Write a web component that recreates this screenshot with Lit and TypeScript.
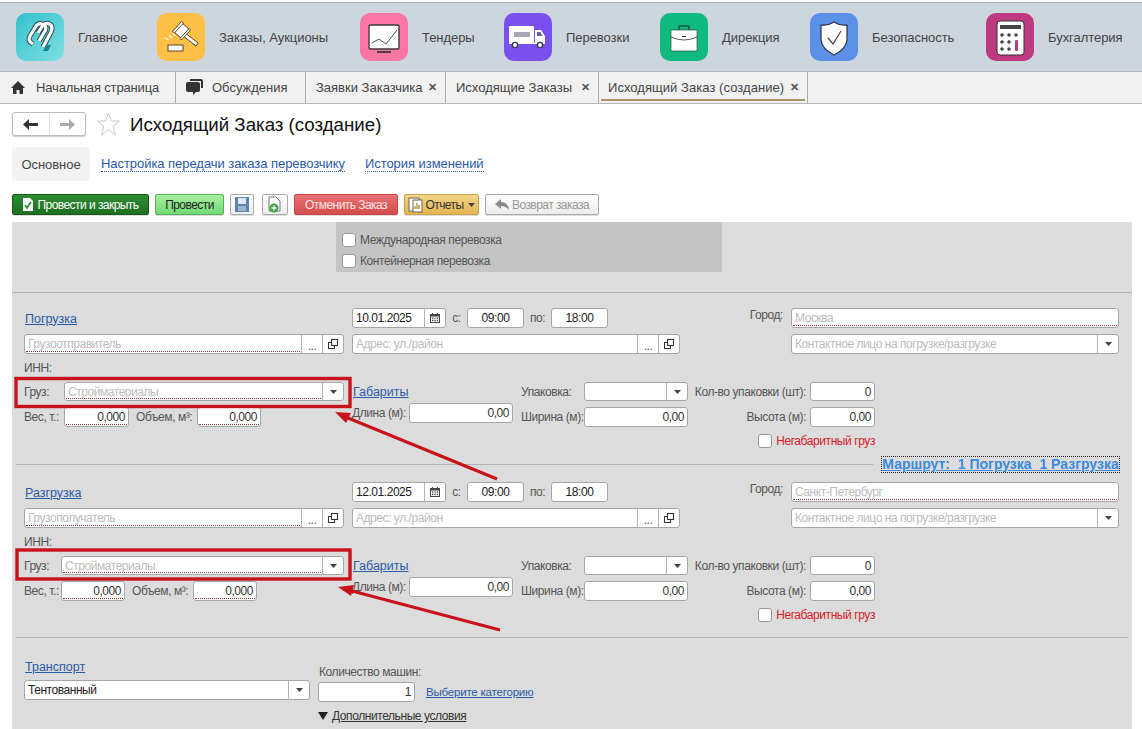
import { LitElement, html, css, svg } from "lit";
import { customElement } from "lit/decorators.js";

const ICONS: Record<string, unknown> = {
  logo: svg`<g fill="none" stroke-linecap="butt" stroke-linejoin="round">
    <g stroke="#2f4a55" stroke-width="5.2"><path d="M17 31 Q11 28 14 23 L20 13 Q23 9 28 12 Q31 14 29 18 L23 28"/><path d="M22 20 L27 12 Q31 9 35 12 Q37 15 35 19 L27 34"/></g>
    <g stroke="#fff" stroke-width="3.2"><path d="M17 31 Q11 28 14 23 L20 13 Q23 9 28 12 Q31 14 29 18 L23 28"/><path d="M22 20 L27 12 Q31 9 35 12 Q37 15 35 19 L27 34"/></g></g>
    <path d="M27 38 L32 38 L35 32 L30 32 Z" fill="#16858e"/>`,
  gavel: svg`<g stroke="#5a4420" stroke-width="1" fill="#fff">
    <path d="M27 19 L41 30 L39 33 L25 22 Z"/>
    <path d="M17 19 L25 10 L32 16 L24 25 Z"/>
    <path d="M15.5 18.5 L24.5 8.5 L26.5 10 L17.5 20 Z"/>
    <path d="M23 25.5 L32 15.5 L33.5 17 L24.5 27 Z"/></g>
    <rect x="11" y="32" width="15" height="6" fill="#fff" stroke="#5a4420"/>
    <g stroke="#fff" stroke-width="1.2"><path d="M12 22 L15 25"/><path d="M8 25 L12 27"/><path d="M16 20 L18 23"/></g>`,
  chart: svg`<rect x="9" y="12" width="30" height="24" rx="1.5" fill="#fff" stroke="#3a3a3a" stroke-width="1.4"/>
    <path d="M12 30 L19 26 L26 31 L37 17" fill="none" stroke="#555" stroke-width="1"/>
    <rect x="17" y="38" width="14" height="2" fill="#444"/>`,
  truck: svg`<rect x="5" y="13" width="25" height="17" rx="1" fill="#fff"/>
    <path d="M31 17 H37 L41 23 V30 H31 Z" fill="#fff"/><path d="M33 19 H36.5 L38.5 23 H33 Z" fill="#6b5e9a"/>
    <path d="M10 19 H26 V24 H10 Z" fill="#a6a6b6"/>
    <rect x="5" y="30" width="36" height="1" fill="#fff"/>
    <g fill="#fff" stroke="#3a3a4a" stroke-width="1.4"><circle cx="11" cy="32" r="2.6"/><circle cx="36" cy="32" r="2.6"/></g>`,
  case: svg`<path d="M19 17 V13 H29 V17" fill="none" stroke="#123" stroke-width="1"/>
    <rect x="11" y="17" width="26" height="21" rx="1" fill="#fff" stroke="#333" stroke-width=".6"/>
    <path d="M11 24 Q24 30 37 24" fill="none" stroke="#333" stroke-width=".8"/><rect x="22" y="23" width="4" height="1" fill="#333"/>`,
  shield: svg`<path d="M24 9 Q30 13 37 12 V27 Q36 36 24 42 Q12 36 11 27 V12 Q18 13 24 9 Z" fill="#fff" stroke="#2b3344" stroke-width="1.2"/>
    <path d="M18 25 L23 31 L31 18" fill="none" stroke="#444" stroke-width="1.2"/>`,
  calc: svg`<rect x="11" y="8" width="27" height="34" rx="3" fill="#fff" stroke="#333" stroke-width="1"/>
    <rect x="14" y="12" width="21" height="4" fill="#444"/>
    <g fill="#444"><circle cx="16" cy="22" r="1.8"/><circle cx="23" cy="22" r="1.8"/><circle cx="30" cy="22" r="1.8"/><circle cx="16" cy="29" r="1.8"/><circle cx="23" cy="29" r="1.8"/><circle cx="16" cy="36" r="1.8"/><circle cx="23" cy="36" r="1.8"/></g>
    <rect x="29" y="27" width="3" height="11" rx="1" fill="#bd3a80"/>`,
};

const NAV = [
  { t: "Главное", i: "logo", c: "teal", w: 48 },
  { t: "Заказы, Аукционы", i: "gavel", c: "orange", w: 110 },
  { t: "Тендеры", i: "chart", c: "pink", w: 51 },
  { t: "Перевозки", i: "truck", c: "purple", w: 63 },
  { t: "Дирекция", i: "case", c: "green", w: 57 },
  { t: "Безопасность", i: "shield", c: "blue", w: 83 },
  { t: "Бухгалтерия", i: "calc", c: "magenta", w: 75 },
];

const caret = html`<svg class="caret" width="7" height="4" viewBox="0 0 7 4"><path d="M0 0H7L3.5 4Z" fill="#444"/></svg>`;
const dots = html`<span class="fb dots">...</span>`;
const copy = html`<span class="fb"><svg width="12" height="12" viewBox="0 0 12 12" fill="none" stroke="#333" stroke-width="1.1"><rect x="4.5" y="1.5" width="6" height="6" fill="#fff"/><path d="M4.5 4.5H1.5V10.5H7.5V7.5"/></svg></span>`;
const dd = html`<span class="fb">${caret}</span>`;
const cal = html`<span class="fb"><svg width="12" height="12" viewBox="0 0 12 12"><rect x="1" y="2" width="10" height="9" fill="#444"/><rect x="2" y="4.5" width="8" height="5.5" fill="#eee"/><g fill="#444"><rect x="3" y="5.5" width="1.2" height="1.2"/><rect x="5.4" y="5.5" width="1.2" height="1.2"/><rect x="7.8" y="5.5" width="1.2" height="1.2"/><rect x="3" y="7.8" width="1.2" height="1.2"/><rect x="5.4" y="7.8" width="1.2" height="1.2"/><rect x="7.8" y="7.8" width="1.2" height="1.2"/></g><rect x="3" y="1" width="1" height="2" fill="#444"/><rect x="8" y="1" width="1" height="2" fill="#444"/></svg></span>`;

@customElement("app-root")
export class AppRoot extends LitElement {
  static styles = css`
    :host { display: block; width: 1142px; height: 729px; overflow: hidden; position: relative; background: #fff;
      font-family: "Liberation Sans", Arial, sans-serif; font-size: 12px; letter-spacing: -0.42px; color: #555; }
    * { box-sizing: border-box; }
    .nav { height: 71px; background: #cdd5dd; border-top: 1px solid #a9b1b9; margin-top: 2px; margin-bottom: -2px; display: flex; align-items: flex-start; gap: 31px; padding: 10px 0 0 16px; }
    .nav-item { display: flex; align-items: center; gap: 14px; font-size: 13px; letter-spacing: -0.05px; color: #444; white-space: nowrap; }
    .ic { width: 48px; height: 48px; border-radius: 10px; display: block; flex: none; }
    .teal { background: linear-gradient(135deg, #31c2cd, #80dfe3); }
    .orange { background: #fdbf45; } .pink { background: #fb76a5; } .purple { background: #7a4ff0; }
    .green { background: #0fb97f; } .blue { background: #5b8fe8; } .magenta { background: #bd3a80; }
    .tabs { height: 33px; background: #f1f1f1; border-top: 1px solid #b4b8bc; border-bottom: 1px solid #b4b8bc; display: flex; font-size: 13px; letter-spacing: 0; color: #444; }
    .tab { height: 100%; display: flex; align-items: center; border-right: 1px solid #aaa; white-space: nowrap; position: relative; }
    .t1 { width: 176px; padding-left: 11px; gap: 11px; letter-spacing: -0.15px; }
    .t2 { width: 130px; padding-left: 10px; gap: 9px; }
    .t3 { width: 140px; padding-left: 10px; }
    .t4 { width: 153px; padding-left: 10px; }
    .t5 { width: 209px; padding-left: 9px; letter-spacing: 0.05px; }
    .x { margin-left: auto; margin-right: 8px; color: #555; font-size: 11px; font-weight: bold; }
    .underline { position: absolute; left: 2px; right: 2px; bottom: 2px; height: 2px; background: #a89468; }
    .head { height: 43px; display: flex; align-items: flex-start; padding: 8px 0 0 12px; }
    .navgrp { width: 74px; height: 24px; border: 1px solid #bbb; border-radius: 3px; display: flex; box-shadow: 0 1px 1px #ccc; background: #fff; }
    .navgrp span { flex: 1; display: flex; align-items: center; justify-content: center; }
    .navgrp span + span { border-left: 1px solid #ddd; }
    .star { margin: 0 10px 0 11px; display: block; }
    h1 { margin: 0; font-size: 18.7px; letter-spacing: 0; font-weight: normal; color: #111; line-height: 26px; white-space: nowrap; }
    .subtabs { height: 34px; display: flex; align-items: center; margin: 0 0 13px 12px; font-size: 13px; letter-spacing: -0.05px; }
    .subtab-on { width: 78px; height: 34px; background: #f2f2f2; border-radius: 3px; display: flex; align-items: center; justify-content: center; color: #444; margin-right: 11px; }
    .dlink { color: #2a5aa8; border-bottom: 1px dotted #2a5aa8; line-height: 14px; margin-right: 20px; }
    .toolbar { height: 21px; margin: 0 0 7px 12px; display: flex; gap: 6px; font-size: 12px; letter-spacing: -0.55px; }
    .btn { height: 21px; border-radius: 2px; display: flex; align-items: center; justify-content: center; gap: 3px; border: 1px solid #aaa; white-space: nowrap; background: linear-gradient(#fff, #ececec); box-shadow: 0 1px 0 #ddd; }
    .b1 { width: 137px; background: linear-gradient(#2f8d32, #1c6f20); border-color: #17591a; color: #fff; }
    .b2 { width: 69px; background: linear-gradient(#a6f0a2, #72da74); border-color: #55b058; color: #222; }
    .b3 { width: 24px; } .b4 { width: 26px; margin-left: 2px; }
    .b5 { width: 104px; background: linear-gradient(#ea7272, #d34c4c); border-color: #c44; color: #fbe4e4; }
    .b6 { width: 75px; background: linear-gradient(#f4d687, #e2b452); border-color: #c9a24a; color: #333; gap: 1px; }
    .b6 .caret { margin-left: 3px; }
    .b7 { width: 114px; color: #999; }
    .panel { margin-left: 12px; width: 1120px; height: 507px; background: #dcdcdc; }
    .flags { margin-left: 324px; width: 386px; height: 50px; background: #c4c4c4; padding: 11px 0 0 6px; display: flex; flex-direction: column; gap: 7px; }
    .chk { display: flex; align-items: center; gap: 3px; height: 14px; white-space: nowrap; }
    .box { width: 14px; height: 14px; background: #fff; border: 1px solid #999; border-radius: 3px; display: block; flex: none; margin-right: 1px; }
    .rule { height: 1px; background: #b2b2b2; }
    .rule-top { margin-top: 20px; }
    .row { display: grid; grid-template-columns: 320px 431px 328px; column-gap: 8px; margin-left: 12px; }
    .r1 { margin-top: 15px; height: 20px; align-items: center; }
    .r2 { margin-top: 6px; height: 20px; }
    .r3 { margin-top: 4px; height: 20px; line-height: 20px; }
    .r4 { margin-top: 4px; height: 19px; grid-template-columns: 320px 523px; }
    .r4 .f { height: 19px; }
    .r5 { margin-top: 2px; height: 24px; grid-template-columns: 320px 523px; align-items: end; }
    .r6 { margin-top: 7px; height: 14px; padding-right: 257px; display: flex; justify-content: flex-end; margin-left: 12px; color: #d8202a; }
    .link { color: #2a5aa8; text-decoration: underline; font-size: 12.5px; letter-spacing: 0; white-space: nowrap; margin-left: 1px; }
    .r1 .link { padding-top: 1px; }
    .f { background: #fff; border: 1px solid #a6a6a6; border-radius: 3px; height: 20px; display: flex; align-items: stretch; flex: none; overflow: hidden; min-width: 0; }
    .v { flex: 1; padding: 1px 2px 0; margin: 1px 1px 1px; line-height: 14px; white-space: nowrap; overflow: hidden; color: #222; min-width: 0; letter-spacing: -0.45px; }
    .ph { color: #bcbcbc; }
    .req { border-bottom: 1px dotted #8a3a3a; }
    .num { text-align: right; color: #333; }
    .ctr { text-align: center; padding-left: 0; padding-right: 0; }
    .fb { width: 21px; flex: none; border-left: 1px solid #b4b4b4; display: flex; align-items: center; justify-content: center; }
    .dots { align-items: flex-end; padding-bottom: 2px; line-height: 10px; }
    .line { display: flex; align-items: center; white-space: nowrap; }
    .lab { flex: none; white-space: nowrap; }
    .right { text-align: right; }
    .mid { display: flex; align-items: center; }
    .mid5 { align-items: flex-end; height: 24px; }
    .top { align-self: flex-start; display: flex; align-items: center; }
    .top .lab { width: 57px; }
    .cell { display: flex; align-items: center; }
    .sep { margin: 8px 0 0 4px; display: flex; align-items: center; gap: 8px; height: 17px; }
    .sep .rule { width: 857px; }
    .route { width: 239px; height: 17px; border: 1px dotted #222; color: #3a8ae0; font-weight: bold; font-size: 14px; letter-spacing: 0; text-decoration: underline; text-align: center; line-height: 15px; white-space: pre; overflow: hidden; }
    .sec2 { margin-top: -6px; }
    .rule-b { margin: 15px 4px 0 4px; }
    .transport { display: flex; margin: 22px 0 0 12px; gap: 8px; }
    .tl { width: 286px; }
    .tl .link { display: block; line-height: 14px; margin-bottom: 6px; }
    .tr { padding-top: 5px; }
    .tr .lab { line-height: 14px; margin-bottom: 3px; margin-left: 1px; }
    .cat { margin-left: 11px; font-size: 11.5px; letter-spacing: -0.2px; }
    .more { margin-top: 7px; height: 14px; line-height: 14px; display: flex; align-items: center; gap: 4px; color: #333; text-decoration: underline; }
    .overlay { position: absolute; left: 0; top: 0; pointer-events: none; }
  `;

  private field(ph: string, val: string, opts: { cls?: string; req?: boolean; w: number; after?: unknown }) {
    return html`<div class="f" style="width:${opts.w}px"><div class="v ${ph ? "ph" : ""} ${opts.req ? "req" : ""} ${opts.cls || ""}">${ph || val}</div>${opts.after || ""}</div>`;
  }

  private section(s: { link: string; date: string; city: string; who: string; second: boolean }) {
    const lw = s.second ? 37 : 40;
    const wgt = s.second ? 64 : 65;
    const gw = s.second ? 283 : 280;
    return html`
      <div class="row r1">
        <div class="line"><span class="link">${s.link}</span></div>
        <div class="line">
          ${this.field("", s.date, { w: 94, after: cal })}
          <span class="lab" style="width:21px;text-align:center">с:</span>
          ${this.field("", "09:00", { w: 57, cls: "ctr" })}
          <span class="lab" style="width:27px;text-align:center">по:</span>
          ${this.field("", "18:00", { w: 57, cls: "ctr" })}
          <span class="lab right" style="width:175px;margin-top:-6px">Город:</span>
        </div>
        ${this.field(s.city, "", { w: 328, req: true })}
      </div>
      <div class="row r2">
        ${this.field(s.who, "", { w: 320, req: true, after: html`${dots}${copy}` })}
        ${this.field("Адрес: ул./район", "", { w: 328, after: html`${dots}${copy}` })}
        ${this.field("Контактное лицо на погрузке/разгрузке", "", { w: 328, after: dd })}
      </div>
      <div class="row r3"><span>ИНН:</span></div>
      <div class="row r4">
        <div class="line"><span class="lab" style="width:${lw}px">Груз:</span>${this.field("Стройматериалы", "", { w: gw, req: true, after: dd })}</div>
        <div class="mid">
          <span class="cell" style="width:169px"><span class="link">Габариты</span></span>
          <span class="lab" style="width:63px">Упаковка:</span>
          ${this.field("", "", { w: 104, after: dd })}
          <span class="lab right" style="width:122px;padding-right:4px">Кол-во упаковки (шт):</span>
          ${this.field("", "0", { w: 65, cls: "num" })}
        </div>
      </div>
      <div class="row r5">
        <div class="line">
          <span class="lab" style="width:${lw}px">Вес, т.:</span>
          ${this.field("", "0,000", { w: wgt, cls: "num", req: true })}
          <span class="lab" style="width:68px;padding-left:7px">Объем, м³:</span>
          ${this.field("", "0,000", { w: 64, cls: "num", req: true })}
        </div>
        <div class="mid mid5">
          <div class="top" style="width:169px"><span class="lab">Длина (м):</span>${this.field("", "0,00", { w: 104, cls: "num" })}</div>
          <span class="lab" style="width:63px;align-self:center;margin-top:4px">Ширина (м):</span>
          ${this.field("", "0,00", { w: 104, cls: "num" })}
          <span class="lab right" style="width:122px;padding-right:4px;align-self:center;margin-top:4px">Высота (м):</span>
          ${this.field("", "0,00", { w: 65, cls: "num" })}
        </div>
      </div>
      <div class="r6 chk"><span class="box"></span>Негабаритный груз</div>`;
  }

  render() {
    return html`
      <div class="nav">
        ${NAV.map((n) => html`<div class="nav-item"><svg class="ic ${n.c}" viewBox="0 0 48 48">${ICONS[n.i]}</svg><span style="width:${n.w}px">${n.t}</span></div>`)}
      </div>
      <div class="tabs">
        <div class="tab t1"><svg width="14" height="13" viewBox="0 0 14 13"><path d="M7 0 L14 7 H12 V13 H8.5 V9 H5.5 V13 H2 V7 H0 Z" fill="#333"/></svg>Начальная страница</div>
        <div class="tab t2"><svg width="17" height="17" viewBox="0 0 17 17"><path d="M4 0H15Q17 0 17 2V9H15V2H4Z" fill="#333"/><path d="M2 3H12Q14 3 14 5V11Q14 13 12 13H10L7 16V13H2Q0 13 0 11V5Q0 3 2 3Z" fill="#333"/></svg>Обсуждения</div>
        <div class="tab t3">Заявки Заказчика<span class="x">✕</span></div>
        <div class="tab t4">Исходящие Заказы<span class="x">✕</span></div>
        <div class="tab t5">Исходящий Заказ (создание)<span class="x">✕</span><span class="underline"></span></div>
      </div>
      <div class="head">
        <div class="navgrp">
          <span><svg width="15" height="11" viewBox="0 0 15 11"><path d="M0 5.5L6 0V4H15V7H6V11Z" fill="#333"/></svg></span>
          <span><svg width="15" height="11" viewBox="0 0 15 11"><path d="M15 5.5L9 0V4H0V7H9V11Z" fill="#aaa"/></svg></span>
        </div>
        <svg class="star" width="23" height="24" viewBox="0 0 23 24"><path d="M11.5 1L14.6 9H22.5L16.2 14.2L18.6 23L11.5 17.8L4.4 23L6.8 14.2L0.5 9H8.4Z" fill="#fff" stroke="#c9c9c9"/></svg>
        <h1>Исходящий Заказ (создание)</h1>
      </div>
      <div class="subtabs">
        <div class="subtab-on">Основное</div>
        <span class="dlink">Настройка передачи заказа перевозчику</span>
        <span class="dlink">История изменений</span>
      </div>
      <div class="toolbar">
        <div class="btn b1"><svg width="12" height="13" viewBox="0 0 12 13"><path d="M1 0H8L11 3V13H1Z" fill="#fff"/><path d="M3 7L5 10L9 4" fill="none" stroke="#2a8a2a" stroke-width="1.6"/></svg>Провести и закрыть</div>
        <div class="btn b2">Провести</div>
        <div class="btn b3"><svg width="14" height="15" viewBox="0 0 14 15"><path d="M0 0H14V15H0Z" fill="#5d84ad"/><rect x="3" y="1" width="8" height="6" fill="#dfe8f2"/><rect x="3" y="9" width="8" height="5" fill="#9bb4cf"/></svg></div>
        <div class="btn b4"><svg width="15" height="17" viewBox="0 0 15 17"><path d="M1 1H8L12 5V15H1Z" fill="#fff" stroke="#777"/><circle cx="6" cy="12" r="4.5" fill="#3aa648"/><path d="M6 9.5V14.5M3.5 12H8.5" stroke="#fff" stroke-width="1.3"/></svg></div>
        <div class="btn b5">Отменить Заказ</div>
        <div class="btn b6"><svg width="16" height="16" viewBox="0 0 16 16"><rect x="1" y="1" width="10" height="13" fill="#fff" stroke="#665"/><rect x="5" y="3" width="9" height="12" fill="#fff" stroke="#665"/><path d="M7 12V9M9 12V6M11 12V8" stroke="#b08a2a" stroke-width="1.3"/></svg>Отчеты ${caret}</div>
        <div class="btn b7"><svg width="14" height="12" viewBox="0 0 14 12"><path d="M0 5L6 0V3Q13 3 14 11Q11 7 6 7V10Z" fill="#8a8a8a"/></svg>Возврат заказа</div>
      </div>
      <div class="panel">
        <div class="flags">
          <label class="chk"><span class="box"></span>Международная перевозка</label>
          <label class="chk"><span class="box"></span>Контейнерная перевозка</label>
        </div>
        <div class="rule rule-top"></div>
        ${this.section({ link: "Погрузка", date: "10.01.2025", city: "Москва", who: "Грузоотправитель", second: false })}
        <div class="sep"><div class="rule"></div><div class="route">Маршрут:  1 Погрузка  1 Разгрузка</div></div>
        <div class="sec2">${this.section({ link: "Разгрузка", date: "12.01.2025", city: "Санкт-Петербург", who: "Грузополучатель", second: true })}</div>
        <div class="rule rule-b"></div>
        <div class="transport">
          <div class="tl">
            <span class="link">Транспорт</span>
            ${this.field("", "Тентованный", { w: 286, after: dd })}
          </div>
          <div class="tr">
            <div class="lab">Количество машин:</div>
            <div class="line">${this.field("", "1", { w: 97, cls: "num" })}<span class="link cat">Выберите категорию</span></div>
            <div class="more"><svg width="10" height="8" viewBox="0 0 10 8"><path d="M0 0H10L5 8Z" fill="#222"/></svg>Дополнительные условия</div>
          </div>
        </div>
      </div>
      <svg class="overlay" width="1142" height="729" viewBox="0 0 1142 729">
        <g fill="none" stroke="#c8121c" stroke-width="3.4">
          <rect x="16" y="378.5" width="334" height="28"/>
          <rect x="17" y="550" width="333" height="29"/>
        </g>
        <g stroke="#c8121c" stroke-width="3" fill="#c8121c">
          <line x1="497" y1="479" x2="348" y2="418"/>
          <line x1="500" y1="630" x2="352" y2="591"/>
        </g>
        <polygon points="335,412 351,413 346,423" fill="#c8121c"/>
        <polygon points="338,587 354,585 351,596" fill="#c8121c"/>
      </svg>
    `;
  }
}
